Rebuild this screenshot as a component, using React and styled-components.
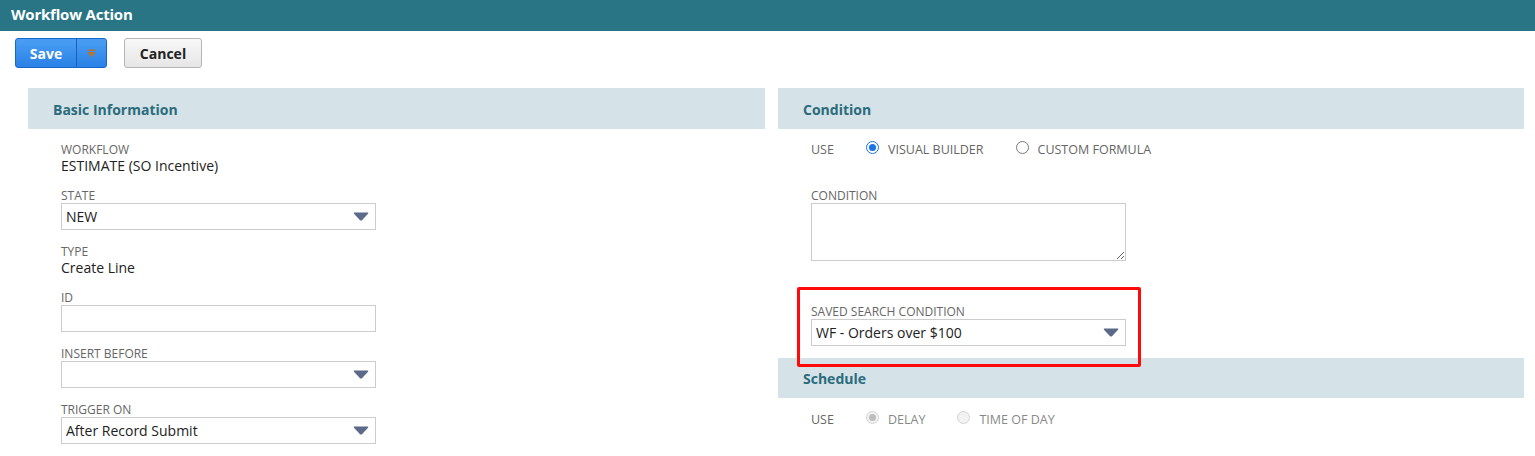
import React from "react";
import styled, { createGlobalStyle } from "styled-components";

const GlobalStyle = createGlobalStyle`
  html, body {
    margin: 0;
    padding: 0;
    background: #fff;
  }
  body {
    font-family: "Open Sans", "Liberation Sans", Arial, sans-serif;
    color: #222;
  }
  * {
    box-sizing: border-box;
  }
`;

const TitleBar = styled.div`
  height: 31px;
  background: #297586;
  color: #fff;
  font-size: 15px;
  font-weight: 700;
  line-height: 29px;
  padding-left: 11px;
  letter-spacing: -0.2px;
`;

const Toolbar = styled.div`
  display: flex;
  align-items: flex-start;
  gap: 17px;
  padding: 7px 0 0 15px;
  height: 37px;
`;

const SplitButton = styled.div`
  display: flex;
  height: 30px;
  width: 92px;
  border: 1px solid #1667c9;
  border-radius: 3px;
  background: linear-gradient(#4a9ff3, #2a81e6);
  overflow: hidden;
`;

const SaveLabel = styled.div`
  width: 61px;
  color: #fff;
  font-weight: 700;
  font-size: 14px;
  display: flex;
  align-items: center;
  justify-content: center;
  border-right: 1px solid #1a5fb8;
`;

const ArrowPart = styled.div`
  flex: 1;
  display: flex;
  align-items: center;
  justify-content: center;
`;

const CancelButton = styled.div`
  height: 30px;
  width: 78px;
  border: 1px solid #b5b5b5;
  border-radius: 3px;
  background: linear-gradient(#f8f8f8, #e6e6e6);
  font-weight: 700;
  font-size: 14px;
  color: #222;
  display: flex;
  align-items: center;
  justify-content: center;
`;

const Columns = styled.div`
  display: grid;
  grid-template-columns: 737px 746px;
  column-gap: 13px;
  padding: 20px 0 0 28px;
`;

const Column = styled.div`
  display: flex;
  flex-direction: column;
`;

const SectionHeader = styled.div`
  height: ${(p) => p.$h || 41}px;
  background: #d5e3e8;
  color: #2b6b7c;
  font-weight: 700;
  font-size: 14px;
  display: flex;
  align-items: center;
  padding-left: 25px;
  padding-top: 1px;
`;

const SectionBody = styled.div`
  display: flex;
  flex-direction: column;
  gap: ${(p) => p.$gap || 14}px;
  padding: ${(p) => p.$top || 13}px 0 0 33px;
`;

const Field = styled.div`
  display: flex;
  flex-direction: column;
  position: relative;
  width: 315px;
`;

const Label = styled.div`
  font-size: 12px;
  line-height: 15px;
  color: #666;
  text-transform: uppercase;
  white-space: nowrap;
`;

const Value = styled.div`
  font-size: 14px;
  line-height: 17px;
  color: #222;
`;

const Select = styled.div`
  height: 27px;
  border: 1px solid #ccc;
  display: flex;
  align-items: center;
  justify-content: space-between;
  padding: 0 6px 0 4px;
  font-size: 14px;
  color: #222;
  background: #fff;
`;

const TextInput = styled.div`
  height: 27px;
  border: 1px solid #ccc;
  background: #fff;
`;

const TextArea = styled.textarea`
  width: 315px;
  height: 58px;
  border: 1px solid #ccc;
  resize: both;
  font-family: inherit;
  margin: 0;
  display: block;
`;

const Highlight = styled.div`
  position: absolute;
  left: -14px;
  top: -17px;
  right: -15px;
  bottom: -21px;
  border: 3px solid #ff0a0a;
  border-radius: 2px;
  z-index: 2;
  pointer-events: none;
`;

const RadioRow = styled.div`
  display: flex;
  align-items: center;
  height: 15px;
`;

const RowLabel = styled.div`
  width: 55px;
  font-size: 12.5px;
  color: #666;
`;

const RadioOption = styled.div`
  display: flex;
  align-items: center;
  gap: 9px;
  margin-right: 32px;
  font-size: 12.5px;
  color: ${(p) => (p.$disabled ? "#888" : "#666")};
  text-transform: uppercase;
`;

const RadioDot = styled.span`
  width: 13px;
  height: 13px;
  border-radius: 50%;
  position: relative;
  top: -2px;
  border: 1px solid
    ${(p) => (p.$disabled ? "#d4d4d4" : p.$checked ? "#1a73e8" : "#777")};
  background: ${(p) => (p.$disabled ? "#f2f2f2" : "#fff")};
  display: inline-block;
  flex: none;

  &::after {
    content: "";
    display: ${(p) => (p.$checked ? "block" : "none")};
    position: absolute;
    left: 2px;
    top: 2px;
    width: 7px;
    height: 7px;
    border-radius: 50%;
    background: ${(p) => (p.$disabled ? "#bdbdbd" : "#1a73e8")};
  }
`;

const Caret = () => (
  <svg width="16" height="9" viewBox="0 0 16 9">
    <path d="M1.5 0.5 H14.5 Q16 0.5 15 1.8 L9 8.2 Q8 9 7 8.2 L1 1.8 Q0 0.5 1.5 0.5 Z" fill="#5b6a8a" />
  </svg>
);

const SaveArrow = () => (
  <svg width="9" height="9" viewBox="0 0 9 9">
    <rect x="0.5" y="0.5" width="8" height="1.4" fill="#b8742f" />
    <path d="M0.5 3 H8.5 L4.5 8.5 Z" fill="#b8742f" />
  </svg>
);

function SelectBox({ value }) {
  return (
    <Select>
      <span>{value}</span>
      <Caret />
    </Select>
  );
}

function Radio({ label, checked, disabled }) {
  return (
    <RadioOption $disabled={disabled}>
      <RadioDot $checked={checked} $disabled={disabled} />
      {label}
    </RadioOption>
  );
}

export default function App() {
  return (
    <>
      <GlobalStyle />
      <TitleBar>Workflow Action</TitleBar>
      <Toolbar>
        <SplitButton>
          <SaveLabel>Save</SaveLabel>
          <ArrowPart>
            <SaveArrow />
          </ArrowPart>
        </SplitButton>
        <CancelButton>Cancel</CancelButton>
      </Toolbar>
      <Columns>
        <Column>
          <SectionHeader>Basic Information</SectionHeader>
          <SectionBody>
            <Field>
              <Label>Workflow</Label>
              <Value>ESTIMATE (SO Incentive)</Value>
            </Field>
            <Field>
              <Label>State</Label>
              <SelectBox value="NEW" />
            </Field>
            <Field>
              <Label>Type</Label>
              <Value>Create Line</Value>
            </Field>
            <Field>
              <Label>ID</Label>
              <TextInput />
            </Field>
            <Field>
              <Label>Insert Before</Label>
              <SelectBox value="" />
            </Field>
            <Field>
              <Label>Trigger On</Label>
              <SelectBox value="After Record Submit" />
            </Field>
          </SectionBody>
        </Column>
        <Column>
          <SectionHeader>Condition</SectionHeader>
          <SectionBody $gap={31}>
            <RadioRow>
              <RowLabel>USE</RowLabel>
              <Radio label="Visual Builder" checked />
              <Radio label="Custom Formula" />
            </RadioRow>
            <Field>
              <Label>Condition</Label>
              <TextArea />
            </Field>
          </SectionBody>
          <SectionBody $top={43}>
            <Field>
              <Highlight />
              <Label>Saved Search Condition</Label>
              <SelectBox value="WF - Orders over $100" />
            </Field>
          </SectionBody>
          <div style={{ height: 12 }} />
          <SectionHeader $h={40}>Schedule</SectionHeader>
          <SectionBody $top={14}>
            <RadioRow>
              <RowLabel>USE</RowLabel>
              <Radio label="Delay" checked disabled />
              <Radio label="Time of Day" disabled />
            </RadioRow>
          </SectionBody>
        </Column>
      </Columns>
    </>
  );
}
